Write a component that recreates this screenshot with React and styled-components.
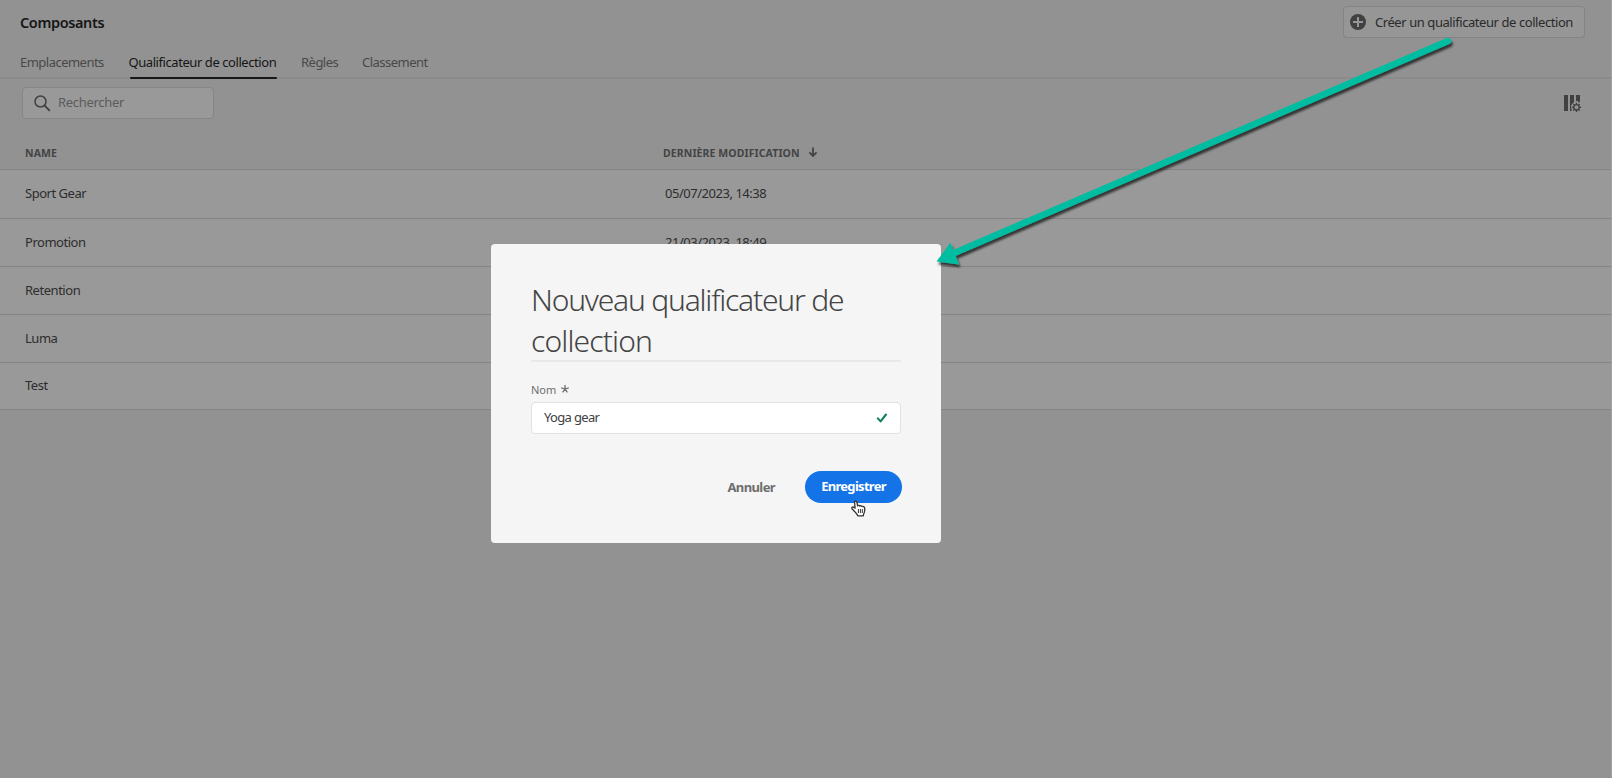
import React from "react";
import styled, { createGlobalStyle } from "styled-components";

const GlobalStyle = createGlobalStyle`
  * { box-sizing: border-box; }
  body { margin: 0; background: #929292; overflow: hidden; font-family: "Noto Sans", "Open Sans", sans-serif; }
  button, input { font-family: inherit; }
`;

const Page = styled.div`
  position: relative;
  width: 1612px;
  height: 778px;
  background: #929292;
  border-right: 1px solid #a0a0a0;
  color: #2d2d2d;
  font-size: 13px;
  overflow: hidden;
`;

const TopBar = styled.header`
  display: flex;
  justify-content: space-between;
  align-items: flex-start;
  height: 44px;
  padding: 6px 26px 0 20px;
`;

const PageTitle = styled.h1`
  margin: 0;
  font-size: 14.5px;
  line-height: 32px;
  font-weight: 600;
  letter-spacing: -0.38px;
  color: #161616;
`;

const CreateButton = styled.button`
  display: flex;
  align-items: center;
  gap: 9px;
  width: 242px;
  height: 32px;
  padding: 0 0 0 6px;
  border: 1px solid #848484;
  border-radius: 4px;
  background: #969696;
  color: #2a2a2a;
  font-size: 13px;
  letter-spacing: -0.43px;
  white-space: nowrap;
`;

const TabList = styled.nav`
  display: flex;
  gap: 24px;
  height: 35px;
  padding-left: 20px;
  border-bottom: 2px solid #8b8b8b;
`;

const Tab = styled.a`
  position: relative;
  width: ${(p) => p.$width}px;
  height: 35px;
  line-height: 36px;
  white-space: nowrap;
  letter-spacing: ${(p) => (p.$active ? -0.43 : -0.52)}px;
  color: ${(p) => (p.$active ? "#161616" : "#494949")};

  &::after {
    content: "";
    display: ${(p) => (p.$active ? "block" : "none")};
    position: absolute;
    left: 1px;
    right: 0;
    bottom: 0;
    height: 2px;
    border-radius: 1px;
    background: #171717;
  }
`;

const Toolbar = styled.div`
  display: flex;
  justify-content: space-between;
  align-items: center;
  height: 48px;
  padding: 0 29px 0 22px;
`;

const SearchField = styled.div`
  display: flex;
  align-items: center;
  gap: 7px;
  width: 192px;
  height: 32px;
  padding: 0 0 2px 11px;
  border: 1px solid #868686;
  border-radius: 4px;
  background: #999;
  color: #5b5b5b;
  letter-spacing: -0.3px;

  svg { margin-top: 2px; }
`;

const IconSlot = styled.div`
  display: flex;
  padding-top: 2px;
`;

const Table = styled.div`
  display: flex;
  flex-direction: column;
`;

const HeaderRow = styled.div`
  display: grid;
  grid-template-columns: 638px 1fr;
  align-items: center;
  height: 43px;
  padding: 10px 0 0 25px;
  border-bottom: 1px solid #848484;
  color: #444;
  font-size: 10.5px;
  font-weight: 700;
  letter-spacing: 0.1px;
`;

const HeaderCell = styled.div`
  display: flex;
  align-items: center;
  gap: 8px;
  padding-bottom: ${(p) => p.$lift || 0}px;
`;

const Row = styled.div`
  display: grid;
  grid-template-columns: 640px 1fr;
  align-items: center;
  height: ${(p) => p.$height}px;
  padding: 0 0 2px 25px;
  border-bottom: 1px solid #848484;
  background: #999;
  letter-spacing: -0.47px;
`;

const Dialog = styled.section`
  position: absolute;
  left: 491px;
  top: 244px;
  width: 450px;
  height: 299px;
  padding: 35px 40px 0;
  border-radius: 4px;
  background: #f5f5f5;
`;

const DialogTitle = styled.h2`
  margin: 0;
  height: 83px;
  border-bottom: 2px solid #e8e8e8;
  font-size: 30px;
  line-height: 41px;
  font-weight: 300;
  color: #444;
  white-space: nowrap;
`;

const TitleLine = styled.span`
  display: block;
  letter-spacing: ${(p) => p.$spacing}px;
`;

const FieldLabel = styled.label`
  display: flex;
  align-items: center;
  gap: 5px;
  height: 18px;
  margin-top: 18px;
  font-size: 11px;
  color: #6e6e6e;
`;

const TextField = styled.div`
  display: flex;
  align-items: center;
  justify-content: space-between;
  height: 32px;
  margin-top: 4px;
  padding: 0 12px 2px;
  border: 1px solid #e1e1e1;
  border-radius: 4px;
  background: #fff;
  color: #404040;
  letter-spacing: -0.66px;

  svg { margin-top: 1px; }
`;

const Actions = styled.div`
  display: flex;
  justify-content: flex-end;
  align-items: center;
  gap: 30px;
  margin: 37px -1px 0 0;
`;

const CancelButton = styled.button`
  padding: 0;
  border: 0;
  background: none;
  color: #6e6e6e;
  font-size: 13px;
  font-weight: 700;
  letter-spacing: -0.6px;
`;

const SaveButton = styled.button`
  width: 97px;
  height: 32px;
  padding: 0 0 2px;
  border: 0;
  border-radius: 16px;
  background: #1473e6;
  color: #fff;
  font-size: 13px;
  font-weight: 700;
  letter-spacing: -0.7px;
`;

const Overlay = styled.svg`
  position: absolute;
  left: 0;
  top: 0;
  pointer-events: none;
`;

const PlusIcon = () => (
  <svg width="16" height="16" viewBox="0 0 16 16">
    <circle cx="8" cy="8" r="8" fill="#414141" />
    <path d="M8 3v10M3 8h10" stroke="#969696" strokeWidth="2" />
  </svg>
);

const SearchIcon = () => (
  <svg width="17" height="17" viewBox="0 0 17 17" fill="none" stroke="#414141" strokeLinecap="round">
    <circle cx="6.500" cy="6.500" r="5.500" strokeWidth="1.500" />
    <path d="M10.700 10.700l4.600 4.600" strokeWidth="1.900" />
  </svg>
);

const ColumnsIcon = () => (
  <svg width="18" height="18" viewBox="0 0 18 18">
    <path d="M0 0h4v16H0zM6 0h4v7.200L7.500 9.500L7 12l.8 4H6zM12 0h4v6.500L14.500 8L14 6h-2z" fill="#414141" />
    <circle cx="12.500" cy="12.300" r="2.700" fill="none" stroke="#414141" strokeWidth="1.300" />
    <g stroke="#414141" strokeWidth="1.300">
      <path d="M12.500 7.700v2M12.500 14.900v2M7.900 12.300h2M15.100 12.300h2M9.300 9.100l1.300 1.300M14.400 14.200l1.300 1.300M15.700 9.100l-1.300 1.300M10.600 14.200l-1.300 1.300" />
    </g>
  </svg>
);

const SortIcon = () => (
  <svg width="10" height="12" viewBox="0 0 10 12" fill="none" stroke="#444" strokeWidth="1.800">
    <path d="M5 .5v8.500M1.400 5.400L5 9l3.600-3.600" />
  </svg>
);

const RequiredIcon = () => (
  <svg width="8" height="8" viewBox="0 0 8 8" stroke="#6e6e6e" strokeWidth="1.300">
    <path d="M4 4V0M4 4L.2 2.800M4 4l3.800-1.200M4 4L1.600 7.400M4 4l2.400 3.400" />
  </svg>
);

const CheckIcon = () => (
  <svg width="12" height="10" viewBox="0 0 12 10" fill="none" stroke="#12805c" strokeWidth="2.100" strokeLinecap="round" strokeLinejoin="round">
    <path d="M1.800 5.400l2.800 3L10 1.500" />
  </svg>
);

const rows = [
  { name: "Sport Gear", date: "05/07/2023, 14:38", height: 49 },
  { name: "Promotion", date: "21/03/2023, 18:49", height: 48 },
  { name: "Retention", height: 48 },
  { name: "Luma", height: 48 },
  { name: "Test", height: 47 },
];

const tabs = [
  { label: "Emplacements", width: 84.5 },
  { label: "Qualificateur de collection", width: 148.5, active: true },
  { label: "Règles", width: 37 },
  { label: "Classement", width: 66 },
];

export default function App() {
  return (
    <Page>
      <GlobalStyle />
      <TopBar>
        <PageTitle>Composants</PageTitle>
        <CreateButton>
          <PlusIcon />
          Créer un qualificateur de collection
        </CreateButton>
      </TopBar>
      <TabList>
        {tabs.map((t) => (
          <Tab key={t.label} $width={t.width} $active={t.active}>
            {t.label}
          </Tab>
        ))}
      </TabList>
      <Toolbar>
        <SearchField>
          <SearchIcon />
          Rechercher
        </SearchField>
        <IconSlot>
          <ColumnsIcon />
        </IconSlot>
      </Toolbar>
      <Table>
        <HeaderRow>
          <HeaderCell $lift={1}>NAME</HeaderCell>
          <HeaderCell>
            DERNIÈRE MODIFICATION <SortIcon />
          </HeaderCell>
        </HeaderRow>
        {rows.map((r) => (
          <Row key={r.name} $height={r.height}>
            <span>{r.name}</span>
            <span>{r.date}</span>
          </Row>
        ))}
      </Table>
      <Dialog>
        <DialogTitle>
          <TitleLine $spacing={-1.2}>Nouveau qualificateur de</TitleLine>
          <TitleLine $spacing={-0.85}>collection</TitleLine>
        </DialogTitle>
        <FieldLabel>
          Nom <RequiredIcon />
        </FieldLabel>
        <TextField>
          Yoga gear
          <CheckIcon />
        </TextField>
        <Actions>
          <CancelButton>Annuler</CancelButton>
          <SaveButton>Enregistrer</SaveButton>
        </Actions>
      </Dialog>
      <Overlay width="1612" height="778" viewBox="0 0 1612 778">
        <defs>
          <filter id="arrowShadow" x="-5%" y="-5%" width="110%" height="115%">
            <feDropShadow dx="1.5" dy="3" stdDeviation="1" floodColor="#000" floodOpacity="0.65" />
          </filter>
        </defs>
        <g filter="url(#arrowShadow)">
          <path d="M1448 41L953 253.500" stroke="#00bda2" strokeWidth="6.500" strokeLinecap="round" />
          <path d="M936.500 261.500L950.500 242.500L959 264.500z" fill="#00bda2" />
        </g>
        <g transform="translate(851 500)">
          <path
            d="M3.500 1.500c1 -.8 2.300 0 2.500 1l.6 3.300c.8-.6 1.800-.5 2.200.3c.8-.6 1.900-.4 2.300.5c1.100-.5 2.300 0 2.500 1.200c.3 1.800.1 3.200-.3 4.600c-.4 1-.9 1.600-1 3.400H6.800c-.4-1.600-1.700-2.500-3-4.100L1 8.700c-.6-.9.3-2 1.400-1.600l1.700 1z"
            fill="#fff"
            stroke="#333"
            strokeWidth="1.300"
            strokeLinejoin="round"
          />
          <path d="M7.400 9v4M9.400 9v4M11.300 9v4" stroke="#333" strokeWidth="1" />
        </g>
      </Overlay>
    </Page>
  );
}
